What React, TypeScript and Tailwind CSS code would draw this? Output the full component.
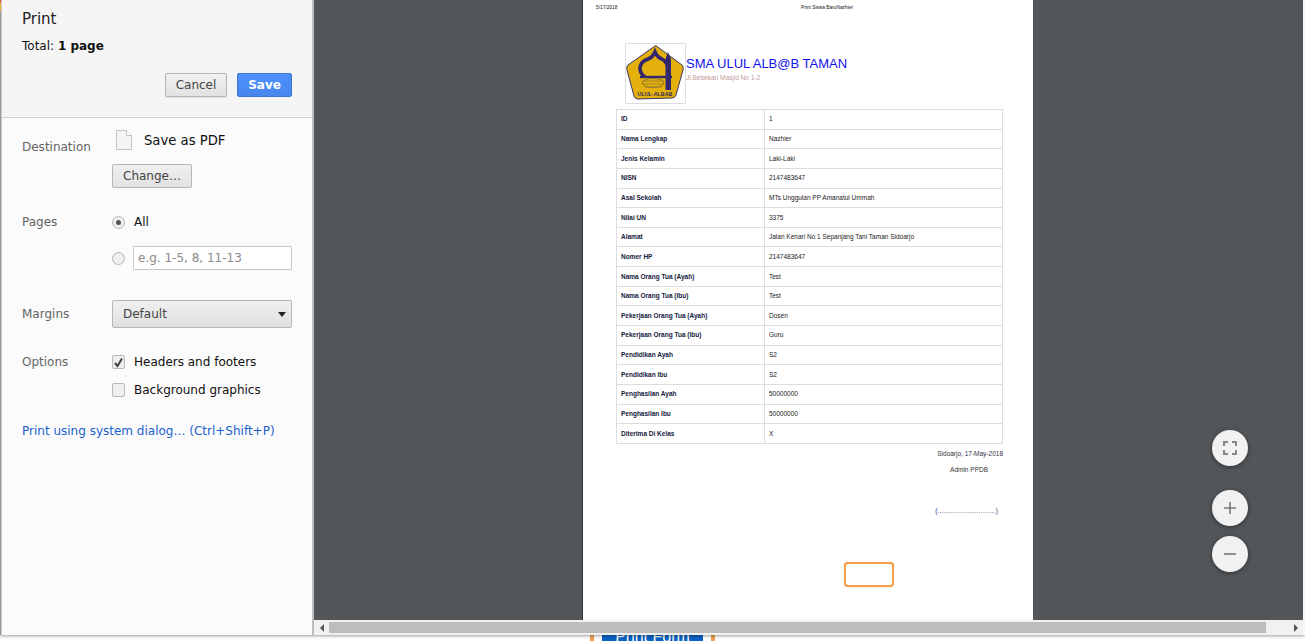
import React from 'react'

const rows = [
    ['ID', '1'],
    ['Nama Lengkap', 'Nazhier'],
    ['Jenis Kelamin', 'Laki-Laki'],
    ['NISN', '2147483647'],
    ['Asal Sekolah', 'MTs Unggulan PP Amanatul Ummah'],
    ['Nilai UN', '3375'],
    ['Alamat', 'Jalan Kenari No 1 Sepanjang Tani Taman Sidoarjo'],
    ['Nomer HP', '2147483647'],
    ['Nama Orang Tua (Ayah)', 'Test'],
    ['Nama Orang Tua (Ibu)', 'Test'],
    ['Pekerjaan Orang Tua (Ayah)', 'Dosen'],
    ['Pekerjaan Orang Tua (Ibu)', 'Guru'],
    ['Pendidikan Ayah', 'S2'],
    ['Pendidikan Ibu', 'S2'],
    ['Penghasilan Ayah', '50000000'],
    ['Penghasilan Ibu', '50000000'],
    ['Diterima Di Kelas', 'X'],
]

function Logo() {
    return (
        <svg width="59" height="59" viewBox="0 0 59 59">
            <path d="M29 2 Q30 1.5 31 2.5 L56 21 Q58 23 57 26 L50 51 Q49 54 46 54 L12 55 Q9 55 8 52 L1 26 Q0 23 2 21 Z" fill="#e4b00c" stroke="#3a3560" strokeWidth="1" />
            <path d="M19 33 C11 27 13 18 22 15 Q27 13 29 8 Q31 13 36 15 C41 18 42 21 42 25" fill="none" stroke="#33276e" strokeWidth="3.6" />
            <path d="M14 33 H46" stroke="#33276e" strokeWidth="2.4" />
            <path d="M39.5 46 V15 L42 8 L45 15 V46 Z" fill="#33276e" />
            <ellipse cx="27" cy="39" rx="11" ry="4.5" fill="none" stroke="#8a7430" strokeWidth="0.9" />
            <path d="M17 37 H38 M17 40 H38 M19 43 H36" stroke="#8a7430" strokeWidth="0.7" />
            <text x="29" y="52" textAnchor="middle" fontSize="5.4" fontWeight="700" fill="#2c2a5c" fontFamily="Liberation Sans, sans-serif">ULUL-ALBAB</text>
        </svg>
    )
}

function FileIcon() {
    return (
        <svg width="18" height="21" viewBox="0 0 18 21">
            <path d="M1.5 0.5 H11.5 L16.5 5.5 V19.5 H1.5 Z" fill="#f5f5f5" stroke="#c4c4c4" />
            <path d="M11.5 0.5 V5.5 H16.5" fill="#ffffff" stroke="#c4c4c4" />
        </svg>
    )
}

function ZoomButton({ children, className }: { children: any; className: string }) {
    return (
        <div className={`absolute left-[898px] w-9 h-9 rounded-full bg-[#f1f1f1] shadow-[0_1px_4px_rgba(0,0,0,0.45)] flex items-center justify-center ${className}`}>
            {children}
        </div>
    )
}

export default function App() {
    return (
        <div className="w-[1305px] h-[641px] overflow-hidden bg-white flex flex-col font-['DejaVu_Sans',sans-serif]">
            <div className="flex h-[635px] shrink-0 shadow-[0_1px_3px_rgba(0,0,0,0.4)] z-10 bg-[#f7f7f7]">
                {/* left edge of page behind the dialog */}
                <div className="w-[1px] bg-[#9a9a9a] shrink-0 flex flex-col">
                    <div className="h-[3px] bg-[#e05a3a]" />
                    <div className="h-[8px] bg-[#f0b030]" />
                </div>
                <div className="w-[1px] bg-[#c8c8c8] shrink-0" />

                {/* settings panel */}
                <div className="w-[312px] shrink-0 bg-[#fbfbfb] border-r-2 border-[#bdbdbd] flex flex-col">
                    <div className="h-[118px] shrink-0 bg-[#f5f5f5] border-b border-[#d2d2d2] px-5 relative">
                        <div className="text-[15px] leading-5 text-[#222] pt-[9px] h-[28px]">Print</div>
                        <div className="text-[12px] leading-4 text-[#111] mt-[10px]">
                            Total: <span className="font-bold">1 page</span>
                        </div>
                        <div className="flex justify-end gap-[10px] mt-[19px]">
                            <div className="w-[62px] h-6 rounded-[2px] border border-[#b5b5b5] bg-gradient-to-b from-[#f0f0f0] to-[#e2e2e2] text-[12px] text-[#444] flex items-center justify-center shadow-[0_1px_1px_rgba(0,0,0,0.1)]">Cancel</div>
                            <div className="w-[55px] h-6 rounded-[2px] border border-[#3f74d0] bg-gradient-to-b from-[#4d90fe] to-[#4787ed] text-[12px] font-bold text-white flex items-center justify-center">Save</div>
                        </div>
                    </div>

                    <div className="flex-1 px-5">
                        <div className="flex mt-[12px]">
                            <div className="w-[90px] pt-[7px] text-[12px] leading-5 text-[#646464]">Destination</div>
                            <div>
                                <div className="flex items-center h-5 pl-[3px] gap-[11px]">
                                    <FileIcon />
                                    <span className="text-[13.2px] text-[#111] pt-[1px]">Save as PDF</span>
                                </div>
                                <div className="mt-[14px] w-[80px] h-6 rounded-[2px] border border-[#b5b5b5] bg-gradient-to-b from-[#f0f0f0] to-[#e2e2e2] text-[12px] text-[#444] flex items-center justify-center">Change…</div>
                            </div>
                        </div>

                        <div className="flex mt-[24px]">
                            <div className="w-[90px] text-[12px] leading-5 text-[#646464]">Pages</div>
                            <div className="flex-1">
                                <div className="flex items-center h-5 gap-[9px]">
                                    <div className="w-[13px] h-[13px] rounded-full border border-[#b5b5b5] bg-[#eee] flex items-center justify-center">
                                        <div className="w-[5px] h-[5px] rounded-full bg-[#555]" />
                                    </div>
                                    <span className="text-[12px] text-[#111]">All</span>
                                </div>
                                <div className="flex items-center gap-[8px] mt-[14px]">
                                    <div className="w-[13px] h-[13px] rounded-full border border-[#b5b5b5] bg-[#eee] mt-[1px]" />
                                    <div className="flex-1 h-6 border border-[#c8c8c8] rounded-[1px] bg-white text-[12px] text-[#8a8a8a] pl-1 flex items-center">e.g. 1-5, 8, 11-13</div>
                                </div>
                            </div>
                        </div>

                        <div className="flex mt-[30px] items-center">
                            <div className="w-[90px] text-[12px] leading-5 text-[#646464]">Margins</div>
                            <div className="w-[180px] h-[28px] rounded-[2px] border border-[#b5b5b5] bg-gradient-to-b from-[#f0f0f0] to-[#e0e0e0] text-[12px] text-[#444] flex items-center justify-between pl-[10px] pr-[5px]">
                                Default
                                <div className="w-0 h-0 border-l-[4.5px] border-r-[4.5px] border-t-[5px] border-l-transparent border-r-transparent border-t-[#222]" />
                            </div>
                        </div>

                        <div className="flex mt-[24px]">
                            <div className="w-[90px] text-[12px] leading-5 text-[#646464]">Options</div>
                            <div>
                                <div className="flex items-center h-5 gap-[9px]">
                                    <div className="w-[13px] h-[14px] rounded-[2px] border border-[#bbb] bg-[#eee] flex items-center justify-center">
                                        <svg width="11" height="11" viewBox="0 0 11 11"><path d="M2 6 L4.5 9 L9 1.5" fill="none" stroke="#444" strokeWidth="2" /></svg>
                                    </div>
                                    <span className="text-[12px] text-[#111]">Headers and footers</span>
                                </div>
                                <div className="flex items-center h-5 gap-[9px] mt-2">
                                    <div className="w-[13px] h-[14px] rounded-[2px] border border-[#bbb] bg-[#eee]" />
                                    <span className="text-[12px] text-[#111]">Background graphics</span>
                                </div>
                            </div>
                        </div>

                        <div className="mt-[21px] text-[12px] leading-5 text-[#1a5fd0]">Print using system dialog… (Ctrl+Shift+P)</div>
                    </div>
                </div>

                {/* preview */}
                <div className="w-[989px] shrink-0 flex flex-col relative">
                    <div className="h-[620px] bg-[#525659] flex justify-center overflow-hidden">
                        <div className="w-[451px] mr-[2px] bg-white border-l border-[#333] text-[#222] font-['Liberation_Sans',sans-serif]">
                            <div className="flex text-[4.8px] leading-[6px] text-[#111] pt-[5px] pl-[13px]">
                                <span className="w-[205px]">5/17/2018</span>
                                <span>Print Siswa BaruNazhier</span>
                            </div>
                            <div className="flex mt-[32px] ml-[42px]">
                                <div className="w-[61px] h-[61px] border border-[#ddd] rounded-[1px] flex items-center justify-center">
                                    <Logo />
                                </div>
                                <div className="pt-[13px]">
                                    <div className="text-[13px] leading-4 text-[#1010f0]">SMA ULUL ALB@B TAMAN</div>
                                    <div className="text-[6.5px] leading-2 mt-[2px] text-[#c49a9a]">Jl.Bebekan Masjid No 1-2</div>
                                </div>
                            </div>
                            <table className="ml-[33px] mt-[5px] w-[387px] border-collapse text-[6.5px] text-[#222] table-fixed">
                                <tbody>
                                    {rows.map(([k, v]) => (
                                        <tr key={k} className="h-[19.65px]">
                                            <td className="w-[148px] border border-[#ddd] pl-[4px] font-bold text-[#14203c]">{k}</td>
                                            <td className="border border-[#ddd] pl-[4px]">{v}</td>
                                        </tr>
                                    ))}
                                </tbody>
                            </table>
                            <div className="w-[387px] ml-[33px] text-right text-[6.5px] text-[#334] mt-[6px] leading-2">Sidoarjo, 17-May-2018</div>
                            <div className="w-[372px] ml-[33px] text-right text-[6.5px] text-[#333] mt-[8px] leading-2">Admin PPDB</div>
                            <div className="w-[382px] ml-[33px] text-right text-[6.5px] text-[#336] mt-[33px] leading-2">(………………………)</div>
                            <div className="ml-[261px] mt-[47px] w-[50px] h-[25px] rounded-[4px] border-2 border-[#f5a04a] bg-white shadow-[0_0_1px_#f5a04a]" />
                        </div>
                    </div>

                    {/* horizontal scrollbar */}
                    <div className="h-[15px] bg-[#f1f1f1] flex items-center">
                        <div className="w-[15px] flex justify-center">
                            <div className="w-0 h-0 border-t-[4px] border-b-[4px] border-r-[4px] border-t-transparent border-b-transparent border-r-[#555]" />
                        </div>
                        <div className="w-[937px] h-[11px] bg-[#bdbdbd]" />
                        <div className="flex-1 flex justify-end pr-[5px]">
                            <div className="w-0 h-0 border-t-[4px] border-b-[4px] border-l-[4px] border-t-transparent border-b-transparent border-l-[#555]" />
                        </div>
                    </div>

                    <ZoomButton className="top-[430px]">
                        <svg width="14" height="14" viewBox="0 0 14 14" fill="none" stroke="#888" strokeWidth="2">
                            <path d="M1 5 V1 H5 M9 1 H13 V5 M13 9 V13 H9 M5 13 H1 V9" />
                        </svg>
                    </ZoomButton>
                    <ZoomButton className="top-[490px]">
                        <svg width="14" height="14" viewBox="0 0 14 14" fill="none" stroke="#777" strokeWidth="1.6">
                            <path d="M7 1 V13 M1 7 H13" />
                        </svg>
                    </ZoomButton>
                    <ZoomButton className="top-[536px]">
                        <svg width="14" height="14" viewBox="0 0 14 14" fill="none" stroke="#777" strokeWidth="1.6">
                            <path d="M1 7 H13" />
                        </svg>
                    </ZoomButton>
                </div>
            </div>

            {/* sliver of the page under the dialog */}
            <div className="flex-1 overflow-hidden pl-[590px]">
                <div className="w-[125px] border-x-4 border-[#f0a050] px-[8px] h-6">
                    <div className="w-[101px] h-6 -mt-[7px] bg-[#0b62c4] text-white text-[16px] leading-[18px] text-center font-['Liberation_Sans',sans-serif]">Print Form</div>
                </div>
            </div>
        </div>
    )
}
